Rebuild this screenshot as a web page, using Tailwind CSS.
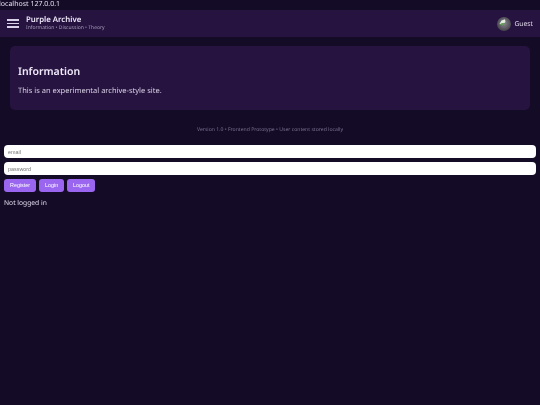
<!DOCTYPE html>
<html><head><meta charset="utf-8"><script src="https://cdn.jsdelivr.net/npm/@tailwindcss/browser@4"></script></head>
<body class="bg-[#140b26] h-[405px] overflow-hidden font-['Noto_Sans',sans-serif] text-white antialiased [text-rendering:geometricPrecision]">
<div class="[will-change:transform]">
<div class="h-[10px] text-[7px] leading-[10px] text-[#e6e0f0] whitespace-nowrap -ml-px">localhost 127.0.0.1</div>
<header class="h-[27px] bg-[#26133f] flex items-center pl-[7px] pr-[7px]">
  <div class="flex flex-col gap-[2px] w-[12px]">
    <span class="h-[1.5px] bg-[#d9d0ea]"></span><span class="h-[1.5px] bg-[#d9d0ea]"></span><span class="h-[1.5px] bg-[#d9d0ea]"></span>
  </div>
  <div class="ml-[7px] flex flex-col">
    <span class="text-[7.8px] leading-[10px] font-semibold text-[#efe9fb]">Purple Archive</span>
    <span class="text-[5px] leading-[7px] text-[#a79cbc]">Information • Discussion • Theory</span>
  </div>
  <div class="ml-auto flex items-center gap-[3px]">
    <svg width="14" height="14" viewBox="0 0 14 14"><defs><radialGradient id="g" cx="50%" cy="45%" r="55%"><stop offset="0" stop-color="#8a888f"/><stop offset="1" stop-color="#45424c"/></radialGradient></defs><circle cx="7" cy="7" r="7" fill="url(#g)"/><path d="M2.5 7 L4.5 3.5 L8 2.2 L8.5 5 L5.5 7.5Z" fill="#e4ebe1"/><path d="M2.5 7.5 L5 6 L8 6.2 L6 8.5Z" fill="#5f9c55"/></svg>
    <span class="text-[6.75px] leading-[10px] text-[#e0d9ec]">Guest</span>
  </div>
</header>
<main class="mx-[10px] mt-[9px] h-[64px] bg-[#26133f] rounded-[5px] px-[8px] flex flex-col">
  <h2 class="mt-[19px] text-[10.5px] leading-[15px] font-semibold text-[#f0eafc]">Information</h2>
  <p class="mt-[6px] text-[7.5px] leading-[11px] text-[#d8d0e6]">This is an experimental archive-style site.</p>
</main>
<p class="mt-[16px] text-center text-[5.1px] leading-[8px] text-[#7a7290]">Version 1.0 • Frontend Prototype • User content stored locally</p>
<section class="mt-[11px] px-[4px] flex flex-col gap-[4px] font-['Liberation_Sans',sans-serif]">
  <input placeholder="email" class="h-[13px] w-full bg-white rounded-[4px] px-[4px] text-[5.4px] placeholder:text-[#777] outline-none">
  <input placeholder="password" class="h-[13px] w-full bg-white rounded-[4px] px-[4px] text-[5.4px] placeholder:text-[#777] outline-none">
  <div class="flex gap-[3px]">
    <button class="h-[13px] px-[6px] bg-[#9a66f0] rounded-[3px] text-[5.4px] text-white">Register</button>
    <button class="h-[13px] px-[6px] bg-[#9a66f0] rounded-[3px] text-[5.4px] text-white">Login</button>
    <button class="h-[13px] px-[5.7px] bg-[#9a66f0] rounded-[3px] text-[5.4px] text-white">Logout</button>
  </div>
</section>
<p class="mt-[5px] px-[4px] text-[6.7px] leading-[11px] text-[#e0d9ec]">Not logged in</p>
</div>
</body></html>
